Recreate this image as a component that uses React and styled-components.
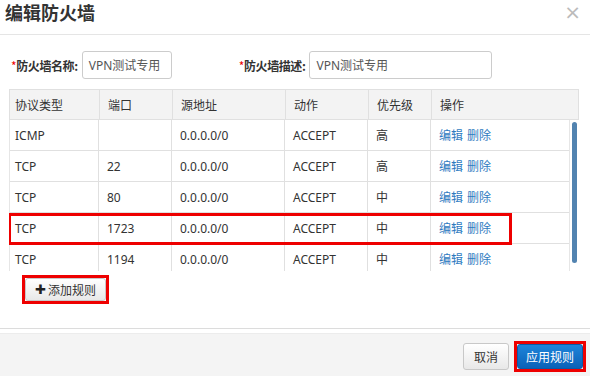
import styled, { createGlobalStyle } from "styled-components";

const GlobalStyle = createGlobalStyle`
  html, body {
    margin: 0;
    padding: 0;
    background: #fff;
  }
  body {
    font-family: "Noto Sans", "Noto Sans CJK SC", sans-serif;
    font-size: 12px;
    color: #333;
  }
  * { box-sizing: border-box; }
`;

const Dialog = styled.div`
  width: 590px;
  height: 376px;
  display: flex;
  flex-direction: column;
  overflow: hidden;
`;

const Header = styled.div`
  height: 35px;
  border-bottom: 1px solid #e5e5e5;
  display: flex;
  justify-content: space-between;
  align-items: flex-start;
  padding: 0 9px 0 5px;
`;

const Title = styled.h3`
  margin: 0;
  font-size: 18px;
  line-height: 25px;
  font-weight: bold;
  color: #333;
  font-family: "Noto Sans CJK SC", sans-serif;
`;

const Close = styled.span`
  font-size: 20px;
  line-height: 24px;
  color: #bbb;
  font-family: "DejaVu Sans", sans-serif;
`;

const Body = styled.div`
  padding: 16px 11px 0 9px;
`;

const FormRow = styled.div`
  display: flex;
  align-items: center;
  height: 28px;
  padding-left: 2px;
`;

const Field = styled.div`
  display: flex;
  align-items: center;
  margin-left: ${(p) => p.$offset || 0}px;
`;

const Star = styled.span`
  color: #e00;
  font-weight: normal;
`;

const Label = styled.label`
  font-weight: bold;
  font-family: "Noto Sans CJK SC", sans-serif;
  letter-spacing: -0.4px;
  color: #333;
`;

const Input = styled.div`
  width: ${(p) => p.$w}px;
  height: 28px;
  margin-left: 4px;
  border: 1px solid #ccc;
  border-radius: 3px;
  padding-left: 6px;
  display: flex;
  align-items: center;
  color: #555;
`;

const Table = styled.div`
  margin-top: 10px;
  width: 570px;
`;

const HeadRow = styled.div`
  display: grid;
  grid-template-columns: 89px 73px 113px 83px 63px 1fr;
  height: 31px;
  background: #f3f3f3;
  border: 1px solid #e0e0e0;
`;

const Cell = styled.div`
  display: flex;
  align-items: center;
  padding-left: 8px;
  border-left: 1px solid #e0e0e0;
  white-space: nowrap;
  &:first-child {
    border-left: none;
    padding-left: 5px;
  }
`;

const ScrollArea = styled.div`
  position: relative;
  display: flex;
  height: 151px;
  overflow: hidden;
`;

const Rows = styled.div`
  width: 561px;
  border-left: 1px solid #e6e6e6;
  border-right: 1px solid #e6e6e6;
`;

const Row = styled.div`
  display: grid;
  grid-template-columns: 88px 73px 113px 83px 63px 1fr;
  height: 31px;
  border-bottom: 1px solid #e0e0e0;
`;

const Track = styled.div`
  width: 9px;
  padding: 2px 0 0 2px;
`;

const Thumb = styled.div`
  width: 5px;
  height: 141px;
  border-radius: 3px;
  background: #5283b0;
`;

const Highlight = styled.div`
  position: absolute;
  left: -1px;
  top: ${(p) => p.$top}px;
  width: 504px;
  height: 32px;
  border: 3px solid #e00;
  pointer-events: none;
`;

const Link = styled.a`
  color: #2f7bbf;
  text-decoration: none;
  margin-right: 4px;
`;

const RedFrame = styled.div`
  display: inline-flex;
  border: 3px solid #e00;
`;

const AddWrap = styled.div`
  margin: 4px 0 0 13px;
`;

const Button = styled.button`
  font-family: "Noto Sans CJK SC", sans-serif;
  font-size: 12px;
  height: ${(p) => p.$h || 25}px;
  padding: 0 ${(p) => p.$px || 10}px;
  border-radius: 3px;
  display: flex;
  align-items: center;
  gap: 2px;
  cursor: pointer;
  color: ${(p) => (p.$primary ? "#fff" : "#333")};
  border: 1px solid ${(p) => (p.$primary ? "#0a5aa8" : "#c8c8c8")};
  background: ${(p) =>
    p.$primary
      ? "linear-gradient(#1e84da, #0a62b8)"
      : "linear-gradient(#ffffff, #e8e8e8)"};
`;

const Plus = styled.span`
  font-family: "DejaVu Sans", sans-serif;
  font-weight: bold;
  font-size: 13px;
  color: #222;
`;

const Footer = styled.div`
  margin-top: auto;
  height: 48px;
  border-top: 1px solid #dcdcdc;
  background: #f4f4f4;
  box-shadow: inset 0 4px 0 #fff, inset 0 5px 0 #ececec;
  display: flex;
  justify-content: flex-end;
  align-items: flex-start;
  gap: 5px;
  padding: 12px 4px 0 0;
`;

const CancelBox = styled.div`
  padding-top: 2px;
`;

const rules = [
  ["ICMP", "", "0.0.0.0/0", "ACCEPT", "高"],
  ["TCP", "22", "0.0.0.0/0", "ACCEPT", "高"],
  ["TCP", "80", "0.0.0.0/0", "ACCEPT", "中"],
  ["TCP", "1723", "0.0.0.0/0", "ACCEPT", "中"],
  ["TCP", "1194", "0.0.0.0/0", "ACCEPT", "中"],
];

export default function App() {
  return (
    <>
      <GlobalStyle />
      <Dialog>
        <Header>
          <Title>编辑防火墙</Title>
          <Close>×</Close>
        </Header>
        <Body>
          <FormRow>
            <Field>
              <Label><Star>*</Star>防火墙名称:</Label>
              <Input $w={90}>VPN测试专用</Input>
            </Field>
            <Field $offset={67}>
              <Label><Star>*</Star>防火墙描述:</Label>
              <Input $w={183}>VPN测试专用</Input>
            </Field>
          </FormRow>
          <Table>
            <HeadRow>
              {["协议类型", "端口", "源地址", "动作", "优先级", "操作"].map((h) => (
                <Cell key={h}>{h}</Cell>
              ))}
            </HeadRow>
            <ScrollArea>
              <Rows>
                {rules.map((r, i) => (
                  <Row key={i}>
                    {r.map((c, j) => (
                      <Cell key={j}>{c}</Cell>
                    ))}
                    <Cell>
                      <Link>编辑</Link>
                      <Link>删除</Link>
                    </Cell>
                  </Row>
                ))}
              </Rows>
              <Track>
                <Thumb />
              </Track>
              <Highlight $top={93} />
            </ScrollArea>
          </Table>
          <AddWrap>
            <RedFrame>
              <Button $h={23} $px={9}>
                <Plus>✚</Plus>添加规则
              </Button>
            </RedFrame>
          </AddWrap>
        </Body>
        <Footer>
          <CancelBox>
            <Button $h={27} $px={10}>取消</Button>
          </CancelBox>
          <RedFrame>
            <Button $primary $h={25} $px={8}>应用规则</Button>
          </RedFrame>
        </Footer>
      </Dialog>
    </>
  );
}
